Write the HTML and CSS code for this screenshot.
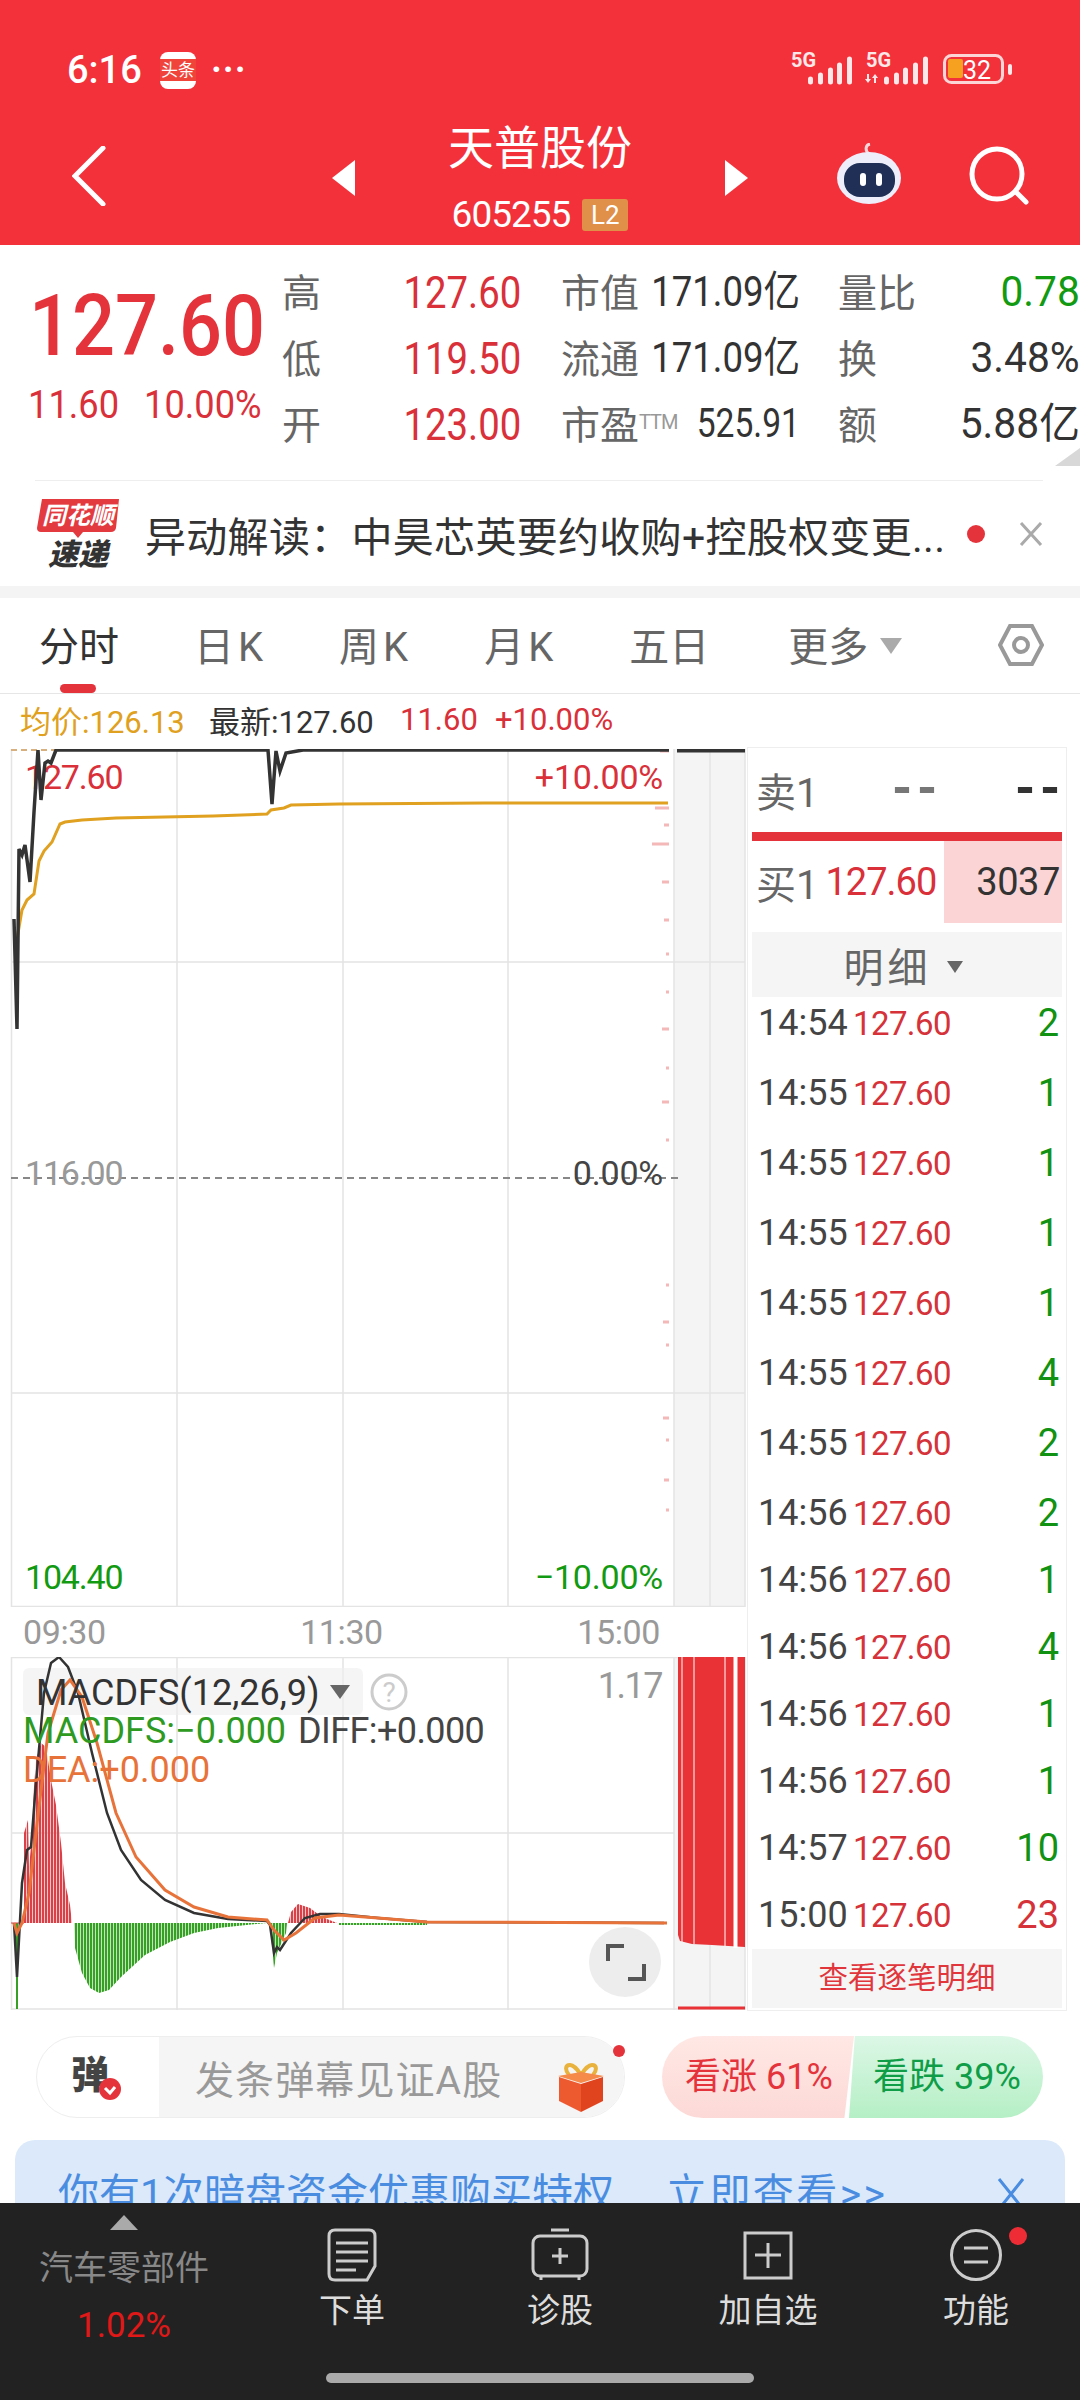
FILE: index.html
```html
<!DOCTYPE html>
<html lang="zh-CN">

<head>
    <meta charset="UTF-8">
    <meta name="viewport" content="width=device-width, initial-scale=1.0">
    <title>天普股份</title>
    <link rel="stylesheet" href="styles.css">
</head>

<body>

    <header class="top">
        <div class="status">
            <div class="status-left">
                <span class="clock">6:16</span>
                <span class="app-icon"><span>头条</span></span>
                <span class="status-dots">···</span>
            </div>
            <svg class="status-right" width="222" height="58" viewBox="790 42 222 58">
                <text class="net-text" x="791" y="67">5G</text>
                <path class="sig" d="M810.5 82v-3M820.5 82v-7M830.5 82v-12M839.5 82v-17M849.5 82v-23" />
                <text class="net-text" x="866" y="67">5G</text>
                <path class="sig-thin" d="M868 74v6M875 83v-6" />
                <path class="sig-arrow" d="M865 79h6l-3 4zM872 78h6l-3-4z" />
                <path class="sig" d="M886.5 82v-3M896.5 82v-7M905.5 82v-12M915.5 82v-17M925.5 82v-23" />
                <rect class="batt" x="944.5" y="55.5" width="58" height="27" rx="7" />
                <rect class="batt-fill" x="948" y="59" width="15" height="19" rx="2" />
                <rect class="batt-nub" x="1008" y="64" width="4" height="11" rx="2" />
                <text class="batt-text" x="963" y="79">32</text>
            </svg>
        </div>
        <div class="nav">
            <svg class="back" width="34" height="60" viewBox="0 0 34 60">
                <path d="M31 2 3 30l28 28" />
            </svg>
            <div class="nav-center">
                <span class="tri-left"></span>
                <div class="stock">
                    <div class="stock-name">天普股份</div>
                    <div class="stock-code">605255<span class="l2">L2</span></div>
                </div>
                <span class="tri-right"></span>
            </div>
            <div class="nav-right">
                <svg class="bot" width="68" height="62" viewBox="0 0 68 62">
                    <path class="antenna" d="M33 11C29 8 29 2 34 1" />
                    <ellipse class="bot-head" cx="33" cy="35" rx="32" ry="26" />
                    <rect class="bot-face" x="8" y="20" width="51" height="34" rx="16" />
                    <rect class="bot-eye" x="24" y="30" width="6" height="13" rx="3" />
                    <rect class="bot-eye" x="40" y="30" width="6" height="13" rx="3" />
                </svg>
                <svg class="search" width="60" height="60" viewBox="0 0 60 60">
                    <circle cx="28" cy="28" r="25" />
                    <path d="M47 46 57 56" />
                </svg>
            </div>
        </div>
    </header>

    <section class="quote">
        <div class="price-box">
            <div class="price">127.60</div>
            <div class="change"><span>11.60</span><span>10.00%</span></div>
        </div>
        <div class="stats">
            <div class="stat"><span class="k">高</span><span class="v up">127.60</span></div>
            <div class="stat"><span class="k">市值</span><span class="n">171.09亿</span></div>
            <div class="stat last"><span class="k">量比</span><span class="n green">0.78</span></div>
            <div class="stat"><span class="k">低</span><span class="v up">119.50</span></div>
            <div class="stat"><span class="k">流通</span><span class="n">171.09亿</span></div>
            <div class="stat last"><span class="k">换</span><span class="n">3.48%</span></div>
            <div class="stat"><span class="k">开</span><span class="v up">123.00</span></div>
            <div class="stat"><span class="k">市盈<sup class="ttm">TTM</sup></span><span class="n pe">525.91</span></div>
            <div class="stat last"><span class="k">额</span><span class="n">5.88亿</span></div>
        </div>
        <span class="corner"></span>
    </section>

    <section class="news">
        <svg class="news-logo" width="82" height="78" viewBox="0 0 82 78">
            <path class="logo-red" d="M5 0h77l-3 29q-1 4-5 4H46l-5 6-5-6H4q-4 0-4-4z" />
            <text class="logo-top" x="41" y="25">同花顺</text>
            <text class="logo-bottom" x="41" y="66">速递</text>
        </svg>
        <div class="news-text">异动解读&#xFF1A;中昊芯英要约收购+控股权变更...</div>
        <span class="news-dot"></span>
        <svg class="news-close" width="24" height="24" viewBox="0 0 24 24">
            <path d="M2 1 22 23M22 1 2 23" />
        </svg>
    </section>

    <div class="band"></div>

    <nav class="tabs">
        <span class="tab on">分时</span>
        <span class="tab k-tab">日K</span>
        <span class="tab k-tab">周K</span>
        <span class="tab k-tab">月K</span>
        <span class="tab">五日</span>
        <span class="tab more">更多<i class="more-arrow"></i></span>
        <svg class="hex" width="46" height="42" viewBox="0 0 46 42">
            <path d="M12 2h22l10 19-10 19H12L2 21z" />
            <circle cx="23" cy="21" r="7" />
        </svg>
    </nav>

    <div class="info">
        <span class="avg">均价:126.13</span>
        <span class="latest">最新:127.60</span>
        <span class="up chg1">11.60</span>
        <span class="up chg2">+10.00%</span>
    </div>

    <section class="board">
        <div class="charts">
            <svg class="chart-price" width="747" height="858" viewBox="0 749 747 858">
                <rect class="strip" x="674" y="749" width="71" height="858" />
                <path class="grid" d="M11.5 749V1607M177 749V1607M343 749V1607M508 749V1607M674 749V1607M710 749V1607M745 749V1607M11 962H745M11 1393H745M11 1606.5H745" />
                <path class="dash-top" d="M11 750H56" />
                <path class="mid" d="M11 1178H680" />
                <text class="t up" x="25" y="789">127.60</text>
                <text class="t up end" x="663" y="789">+10.00%</text>
                <text class="t gray" x="25" y="1185">116.00</text>
                <text class="t dark end" x="663" y="1185">0.00%</text>
                <text class="t green" x="25" y="1589">104.40</text>
                <text class="t green end" x="663" y="1589">−10.00%</text>
                <path class="ticks" d="M660 751h9M655 808h14M664 825h5M652 844h17M662 882h7M664 920h5M666 954h3M666 992h3M662 1029h7M666 1068h3M662 1102h7M666 1140h3M666 1285h3M663 1322h6M666 1345h3M663 1418h6M666 1440h3M664 1480h5M666 1510h3" />
                <path class="avg-line" d="M17 939 22 910 27 900 34 894 39 861 44 851 52 842 60 824 65 822 82 820 116 818 213 816 267 814 271 810 284 808 291 805 339 804 485 803 668 803" />
                <path class="price-line" d="M14 919 17 1029 19 849 22 855 25 845 30 882 34 812 38 750 41 800 45 763 48 761 51 763 56 750H268L272 804 276 751 280 771 286 753 303 750H669" />
                <path class="price-tail" d="M677 750H745" />
            </svg>
            <div class="time-axis"><span>09:30</span><span>11:30</span><span>15:00</span></div>
            <svg class="chart-macd" width="747" height="354" viewBox="0 1657 747 354">
                <defs>
                    <pattern id="redBars" width="3" height="10" patternUnits="userSpaceOnUse">
                        <rect class="bar-red" width="2.3" height="10" />
                    </pattern>
                    <pattern id="greenBars" width="3" height="10" patternUnits="userSpaceOnUse">
                        <rect class="bar-green" width="2.3" height="10" />
                    </pattern>
                </defs>
                <rect class="strip" x="674" y="1657" width="71" height="352" />
                <path class="grid" d="M11.5 1657V2010M177 1657V2010M343 1657V2010M508 1657V2010M674 1657V2010M710 1657V2010M745 1657V2010M11 1657.5H745M11 1833H674M11 2009H745" />
                <path class="vol-red" d="M678 1657H745V1947L712 1945 692 1944 680 1941 678 1935Z" />
                <path class="vol-gap" d="M682 1657V1942M694 1657V1944M725 1657V1946" />
                <path class="vol-gap-wide" d="M735.5 1657V1948" />
                <path class="vol-foot" d="M678 2008H745" />
                <path fill="url(#redBars)" d="M24 1923V1833L28 1820 29 1867 31 1847 34 1787 36 1760 41 1743 46 1747 51 1780 56 1805 61 1843 65 1883 70 1905 72 1923Z" />
                <path fill="url(#redBars)" d="M288 1923 291 1912 298 1904 310 1908 322 1917 337 1923Z" />
                <path fill="url(#greenBars)" d="M74 1923 75 1948 82 1973 90 1988 99 1993 109 1990 121 1977 145 1955 170 1942 194 1933 218 1928 267 1923Z" />
                <path fill="url(#greenBars)" d="M270 1923 274 1968 277 1953 286 1933 287 1923Z" />
                <path fill="url(#greenBars)" d="M339 1923H427V1925H339Z" />
                <path class="spike" d="M17 1923V2009" />
                <path class="zero" d="M11 1923H24" />
                <rect class="picker" x="23" y="1668" width="340" height="47" rx="6" />
                <path class="diff-line" d="M14 1923 17 1977 22 1883 27 1850 31 1847 36 1783 44 1693 51 1663 59 1657 68 1667 78 1693 92 1753 107 1813 121 1850 141 1880 165 1900 194 1913 228 1919 267 1921 270 1925 274 1953 277 1947 280 1950 291 1933 305 1918 320 1914 339 1914 378 1918 427 1922 664 1923" />
                <path class="dea-line" d="M14 1923 17 1933 22 1923 29 1893 39 1807 48 1733 61 1690 70 1680 82 1697 97 1743 116 1813 136 1857 165 1890 194 1907 228 1917 267 1920 274 1930 284 1940 296 1933 315 1918 339 1915 378 1918 427 1922 667 1923" />
                <text class="m picker-text" x="36" y="1705">MACDFS(12,26,9)</text>
                <path class="pick-arrow" d="M330 1685h20l-10 14z" />
                <circle class="help" cx="389" cy="1692" r="17" />
                <text class="help-q" x="389" y="1702">?</text>
                <text class="m gray end scale-max" x="662" y="1698">1.17</text>
                <text class="m macd-green" x="23" y="1743">MACDFS:−0.000</text>
                <text class="m dark" x="298" y="1743">DIFF:+0.000</text>
                <text class="m dea" x="23" y="1782">DEA:+0.000</text>
                <ellipse class="full-btn" cx="625" cy="1962" rx="36" ry="35" />
                <path class="full-icon" d="M608 1961V1946H624M644 1964V1979H628" />
            </svg>
        </div>

        <aside class="side">
            <div class="sell"><span class="lvl">卖1</span><span class="nil gray-nil">--</span><span class="nil">--</span></div>
            <div class="red-bar"></div>
            <div class="buy">
                <span class="lvl">买1</span>
                <span class="buy-price up">127.60</span>
                <span class="buy-qty">3037</span>
            </div>
            <div class="detail-head">明细<i class="detail-arrow"></i></div>
            <ul class="ticks-list">
                <li class="row"><span>14:54</span><b>127.60</b><em>2</em></li>
                <li class="row"><span>14:55</span><b>127.60</b><em>1</em></li>
                <li class="row"><span>14:55</span><b>127.60</b><em>1</em></li>
                <li class="row"><span>14:55</span><b>127.60</b><em>1</em></li>
                <li class="row"><span>14:55</span><b>127.60</b><em>1</em></li>
                <li class="row"><span>14:55</span><b>127.60</b><em>4</em></li>
                <li class="row"><span>14:55</span><b>127.60</b><em>2</em></li>
                <li class="row tight"><span>14:56</span><b>127.60</b><em>2</em></li>
                <li class="row tight"><span>14:56</span><b>127.60</b><em>1</em></li>
                <li class="row tight"><span>14:56</span><b>127.60</b><em>4</em></li>
                <li class="row tight"><span>14:56</span><b>127.60</b><em>1</em></li>
                <li class="row tight"><span>14:56</span><b>127.60</b><em>1</em></li>
                <li class="row tight"><span>14:57</span><b>127.60</b><em>10</em></li>
                <li class="row end-row"><span>15:00</span><b>127.60</b><em class="red">23</em></li>
            </ul>
            <div class="detail-link">查看逐笔明细</div>
        </aside>
    </section>

    <section class="social">
        <div class="barrage">
            <div class="barrage-tag">
                <span>弹</span>
                <svg class="tag-check" width="24" height="24" viewBox="0 0 24 24">
                    <circle cx="12" cy="12" r="11" />
                    <path d="M7 11l5 5 5-6" />
                </svg>
            </div>
            <div class="barrage-input">
                <span>发条弹幕见证A股</span>
                <svg class="gift" width="48" height="50" viewBox="0 0 48 50">
                    <path class="bow" d="M24 13C14 -4 4 4 12 13M24 13C34 -4 44 4 36 13" />
                    <path class="gift-lid" d="M1 14 24 10l23 4-23 7z" />
                    <path class="gift-left" d="M2 15 24 22v28L2 39z" />
                    <path class="gift-right" d="M46 15 24 22v28l22-11z" />
                </svg>
                <span class="barrage-dot"></span>
            </div>
        </div>
        <div class="mood">
            <div class="bull">看涨 61%</div>
            <div class="bear">看跌 39%</div>
        </div>
    </section>

    <div class="promo">
        <span class="promo-text">你有1次暗盘资金优惠购买特权</span>
        <span class="promo-link">立即查看&gt;&gt;</span>
        <svg class="promo-close" width="30" height="32" viewBox="0 0 30 32">
            <path d="M3 1 27 31M27 1 3 31" />
        </svg>
    </div>

    <footer class="bottom">
        <div class="bottom-row">
            <div class="sector">
                <span class="sector-tri"></span>
                <div class="sector-name">汽车零部件</div>
                <div class="sector-pct">1.02%</div>
            </div>
            <div class="action">
                <svg width="50" height="54" viewBox="0 0 50 54">
                    <path d="M8 2h34q6 0 6 6v30l-8 14H8q-6 0-6-6V8q0-6 6-6z" />
                    <path d="M9 15h32M9 24h32M9 33h32M9 42h20" />
                </svg>
                <span>下单</span>
            </div>
            <div class="action">
                <svg width="58" height="54" viewBox="0 0 58 54">
                    <path d="M20 2h18" />
                    <rect x="2" y="8" width="54" height="40" rx="7" />
                    <path d="M29 20v16M21 28h16M10 48v4M48 48v4" />
                </svg>
                <span>诊股</span>
            </div>
            <div class="action">
                <svg width="50" height="54" viewBox="0 0 50 54">
                    <rect x="2" y="5" width="46" height="45" />
                    <path d="M25 15v25M12 27h26" />
                </svg>
                <span>加自选</span>
            </div>
            <div class="action">
                <svg width="54" height="54" viewBox="0 0 54 54">
                    <circle cx="27" cy="27" r="24.5" />
                    <path d="M15 20h24M15 34h24" />
                </svg>
                <span>功能</span>
                <i class="action-dot"></i>
            </div>
        </div>
        <div class="home-bar"></div>
    </footer>

</body>

</html>
```

FILE: styles.css
```css
body {
    margin: 0;
    width: 1080px;
    height: 2400px;
    overflow: hidden;
    display: flex;
    flex-direction: column;
    background-color: #fff;
    color: #333;
    font-family: Roboto, "Noto Sans CJK SC", sans-serif;
}

svg {
    display: block;
}

.up {
    color: #d9303a;
    fill: #d9303a;
}

.green {
    color: #129a12;
    fill: #129a12;
}

/* header */
.top {
    height: 245px;
    background-color: #f3313b;
    color: #fff;
}

.status {
    height: 107px;
    box-sizing: border-box;
    padding: 50px 68px 0 67px;
    display: flex;
    justify-content: space-between;
    align-items: flex-start;
}

.status-left {
    display: flex;
    align-items: center;
    height: 40px;
}

.status-right {
    margin-top: -8px;
}

.clock {
    font-size: 38px;
    font-weight: 500;
    width: 93px;
}

.app-icon {
    width: 36px;
    height: 37px;
    border-radius: 8px;
    background-color: #fff;
    display: flex;
    align-items: center;
}

.app-icon span {
    width: 36px;
    height: 22px;
    line-height: 22px;
    background-color: #f0443a;
    font-size: 17px;
    text-align: center;
    white-space: nowrap;
}

.status-dots {
    margin-left: 15px;
    font-size: 36px;
    font-weight: 700;
    letter-spacing: 1px;
    line-height: 40px;
}

.net-text {
    font-size: 20px;
    font-weight: 700;
    fill: #fde8e9;
}

.sig {
    stroke: #fde8e9;
    stroke-width: 5;
    stroke-linecap: round;
    fill: none;
}

.sig-thin {
    stroke: #fde8e9;
    stroke-width: 2;
    fill: none;
}

.sig-arrow {
    fill: #fde8e9;
}

.batt {
    fill: none;
    stroke: #fde8e9;
    stroke-width: 3;
    opacity: 0.9;
}

.batt-fill {
    fill: #f6a11f;
}

.batt-nub {
    fill: #fde8e9;
}

.batt-text {
    fill: #fff;
    font-size: 25px;
}

.nav {
    height: 138px;
    display: grid;
    grid-template-columns: 1fr auto 1fr;
    align-items: center;
}

.back {
    margin-left: 72px;
}

.back path,
.search circle,
.search path {
    fill: none;
    stroke: #fff;
    stroke-width: 5;
    stroke-linecap: round;
}

.nav-center {
    display: flex;
    align-items: center;
    gap: 93px;
    margin-top: 4px;
}

.tri-left,
.tri-right {
    width: 0;
    height: 0;
    border-top: 18px solid transparent;
    border-bottom: 18px solid transparent;
}

.tri-left {
    border-right: 23px solid #fff;
}

.tri-right {
    border-left: 23px solid #fff;
}

.stock {
    width: 184px;
    margin-top: -4px;
}

.stock-name {
    font-size: 46px;
    line-height: 56px;
    white-space: nowrap;
    text-align: center;
}

.stock-code {
    margin-top: 22px;
    height: 34px;
    font-size: 37px;
    line-height: 34px;
    letter-spacing: -1px;
    display: flex;
    align-items: center;
    justify-content: center;
    white-space: nowrap;
}

.l2 {
    margin-left: 12px;
    width: 46px;
    height: 32px;
    line-height: 32px;
    border-radius: 3px;
    background-color: #e09048;
    font-size: 26px;
    text-align: center;
    letter-spacing: 0;
}

.nav-right {
    justify-self: end;
    display: flex;
    align-items: center;
    gap: 65px;
    padding-right: 51px;
}

.bot {
    margin-top: -4px;
}

.antenna {
    fill: none;
    stroke: #f9d6d9;
    stroke-width: 3;
}

.bot-head {
    fill: #eeeefb;
}

.bot-face {
    fill: #1f2f55;
}

.bot-eye {
    fill: #fff;
}

/* quote */
.quote {
    position: relative;
    height: 235px;
    display: flex;
}

.price-box {
    width: 282px;
    box-sizing: border-box;
    padding: 46px 0 0 28px;
}

/* the digits of the quote are taller and narrower than Roboto */
.price {
    font-size: 86px;
    line-height: 70px;
    font-weight: 500;
    color: #e5333b;
    margin-left: 1px;
    white-space: nowrap;
    transform: scaleX(0.88);
    transform-origin: left center;
}

.change {
    margin-top: 24px;
    display: flex;
    gap: 18px;
    font-size: 39px;
    line-height: 40px;
    color: #d9303a;
}

.change span {
    transform: scaleX(0.93);
    transform-origin: left center;
}

.stats {
    flex: 1;
    padding-top: 15px;
    display: grid;
    grid-template-columns: 279px 277px 242px;
    grid-auto-rows: 66px;
}

.stat {
    display: flex;
    align-items: center;
    justify-content: space-between;
    padding-right: 40px;
    white-space: nowrap;
}

.stat:nth-child(3n+2) {
    padding-right: 38px;
}

.stat.last {
    padding-right: 0;
}

.k {
    font-size: 39px;
    color: #666;
    margin-bottom: 6px;
}

.ttm {
    font-size: 20px;
    color: #999;
    vertical-align: 10px;
    line-height: 0;
    letter-spacing: -1px;
}

.v {
    font-size: 44px;
    margin-left: -30px;
    transform: scaleX(0.87);
    transform-origin: right center;
}

.n {
    font-size: 42px;
    line-height: 40px;
    margin-left: -30px;
    margin-bottom: 3px;
    transform: scaleX(0.87);
    transform-origin: right center;
}

.n.pe {
    font-size: 40px;
    transform: scaleX(0.84);
}

.last .n {
    transform: scaleX(0.97);
}

.corner {
    position: absolute;
    right: 0;
    bottom: 14px;
    border-left: 25px solid transparent;
    border-bottom: 18px solid #d8d8d8;
}

/* news */
.news {
    height: 106px;
    margin: 0 37px 0 35px;
    border-top: 1px solid #eee;
    box-sizing: border-box;
    display: flex;
    align-items: center;
    position: relative;
}

.news-logo {
    margin: 8px 0 0 2px;
}

.logo-red {
    fill: #e33a3f;
}

.logo-top {
    fill: #fff;
    font-size: 24px;
    font-weight: 700;
    font-style: italic;
    text-anchor: middle;
}

.logo-bottom {
    fill: #333;
    font-size: 30px;
    font-weight: 900;
    font-style: italic;
    text-anchor: middle;
}

.news-text {
    margin-left: 26px;
    width: 805px;
    font-size: 41px;
    letter-spacing: 0.3px;
    color: #333;
    white-space: nowrap;
}

.news-dot {
    position: absolute;
    left: 932px;
    top: 44px;
    width: 18px;
    height: 18px;
    border-radius: 50%;
    background-color: #e5333b;
}

.news-close {
    position: absolute;
    right: 0;
    top: 41px;
}

.news-close path {
    fill: none;
    stroke: #aaa;
    stroke-width: 3;
}

.band {
    height: 12px;
    background-color: #f4f4f4;
}

/* tabs */
.tabs {
    height: 96px;
    box-sizing: border-box;
    border-bottom: 1px solid #e6e6e6;
    padding-left: 39px;
    display: flex;
    align-items: center;
    gap: 72px;
    position: relative;
    font-size: 40px;
    color: #666;
}

.tab {
    white-space: nowrap;
    padding-bottom: 3px;
}

.k-tab {
    letter-spacing: 4px;
}

.tab.on {
    color: #333;
    margin-right: 3px;
}

.tab.on::after {
    content: "";
    position: absolute;
    left: 60px;
    top: 86px;
    width: 36px;
    height: 9px;
    border-radius: 5px;
    background-color: #e5333b;
}

.more {
    margin-left: 7px;
    display: flex;
    align-items: center;
}

.more-arrow {
    margin: 4px 0 0 12px;
    border-left: 11px solid transparent;
    border-right: 11px solid transparent;
    border-top: 16px solid #aaa;
}

.hex {
    position: absolute;
    left: 998px;
    top: 26px;
}

.hex path,
.hex circle {
    fill: none;
    stroke: #999;
    stroke-width: 4;
}

/* info line */
.info {
    height: 51px;
    display: flex;
    align-items: center;
    padding-left: 20px;
    font-size: 31px;
    white-space: nowrap;
}

.avg {
    color: #e0a020;
    width: 189px;
}

.latest {
    color: #333;
    width: 191px;
}

.chg1 {
    width: 95px;
}

/* board */
.board {
    height: 1266px;
    display: flex;
    padding-right: 13px;
    box-sizing: border-box;
}

.charts {
    width: 747px;
    padding-top: 4px;
}

.strip {
    fill: #f4f4f4;
}

.grid {
    fill: none;
    stroke: #e4e4e4;
    stroke-width: 1.5;
}

.dash-top {
    fill: none;
    stroke: #d8b080;
    stroke-width: 2;
    stroke-dasharray: 6 4;
}

.mid {
    fill: none;
    stroke: #888;
    stroke-width: 2;
    stroke-dasharray: 7 5;
}

.t {
    font-size: 34px;
    letter-spacing: -1.2px;
}

.t.end {
    letter-spacing: -0.2px;
}

.end {
    text-anchor: end;
}

.gray {
    fill: #999;
}

.dark {
    fill: #444;
}

.ticks {
    fill: none;
    stroke: #f4b8b8;
    stroke-width: 3;
}

.avg-line {
    fill: none;
    stroke: #e0a020;
    stroke-width: 3;
}

.price-line {
    fill: none;
    stroke: #333;
    stroke-width: 3.5;
}

.price-tail {
    fill: none;
    stroke: #333;
    stroke-width: 5;
}

.time-axis {
    height: 50px;
    padding: 0 87px 0 23px;
    display: flex;
    justify-content: space-between;
    align-items: center;
    font-size: 34px;
    color: #999;
    letter-spacing: -0.4px;
}

.bar-red {
    fill: #d94048;
}

.bar-green {
    fill: #36a024;
}

.vol-red {
    fill: #e83236;
}

.vol-foot {
    fill: none;
    stroke: #e83236;
    stroke-width: 3;
}

.vol-gap,
.vol-gap-wide {
    fill: none;
    stroke: #fff;
    stroke-width: 1;
}

.vol-gap-wide {
    stroke-width: 4;
}

.spike {
    fill: none;
    stroke: #36a024;
    stroke-width: 2;
}

.zero {
    fill: none;
    stroke: #d94048;
    stroke-width: 1;
}

.picker {
    fill: #eee;
    opacity: 0.6;
}

.diff-line {
    fill: none;
    stroke: #333;
    stroke-width: 2.5;
}

.dea-line {
    fill: none;
    stroke: #e8733a;
    stroke-width: 3;
}

.m {
    font-size: 36px;
    letter-spacing: -0.6px;
}

.picker-text {
    fill: #333;
    letter-spacing: 0;
}

.scale-max {
    letter-spacing: -1.5px;
}

.macd-green {
    fill: #2e9a1f;
    letter-spacing: 0;
}

.dea {
    fill: #e8733a;
    letter-spacing: 0;
}

.pick-arrow {
    fill: #666;
}

.help {
    fill: none;
    stroke: #ccc;
    stroke-width: 3;
}

.help-q {
    fill: #ccc;
    font-size: 28px;
    text-anchor: middle;
}

.full-btn {
    fill: #ededed;
}

.full-icon {
    fill: none;
    stroke: #555;
    stroke-width: 4;
}

/* side panel */
.side {
    width: 320px;
    height: 1264px;
    margin-top: 2px;
    box-sizing: border-box;
    border: 1px solid #eee;
    padding: 0 4px;
}

.sell {
    height: 84px;
    display: flex;
    align-items: center;
    padding-left: 4px;
}

.lvl {
    font-size: 40px;
    color: #666;
    white-space: nowrap;
}

.sell .lvl {
    width: 131px;
}

.nil {
    font-family: "Liberation Mono", monospace;
    font-size: 50px;
    font-weight: 700;
    line-height: 40px;
    letter-spacing: -5px;
    color: #333;
}

.gray-nil {
    color: #777;
    width: 123px;
}

.red-bar {
    height: 9px;
    background-color: #e5333b;
}

.buy {
    height: 82px;
    display: flex;
    align-items: center;
    padding-left: 4px;
}

.buy-price {
    margin-left: 7px;
    width: 119px;
    font-size: 38px;
    letter-spacing: -1px;
    white-space: nowrap;
}

.buy-qty {
    flex: 1;
    align-self: stretch;
    background-color: #fbd5d5;
    font-size: 38px;
    line-height: 82px;
    text-align: right;
    padding-right: 2px;
    letter-spacing: -0.4px;
}

.detail-head {
    margin-top: 9px;
    height: 65px;
    background-color: #f5f5f5;
    color: #666;
    font-size: 40px;
    letter-spacing: 4px;
    display: flex;
    align-items: center;
    justify-content: center;
    padding-right: 8px;
}

.detail-arrow {
    margin: 4px 0 0 15px;
    border-left: 8px solid transparent;
    border-right: 8px solid transparent;
    border-top: 12px solid #666;
}

.ticks-list {
    list-style: none;
    margin: 0;
    padding: 0;
}

.row {
    height: 70px;
    line-height: 53px;
    display: flex;
    padding: 0 3px 0 6px;
    white-space: nowrap;
}

.row.tight {
    height: 67px;
}

.row.end-row {
    height: 60px;
}

.row span {
    width: 95px;
    font-size: 36px;
    color: #444;
}

.row b {
    font-weight: 400;
    font-size: 33px;
    color: #d5323a;
    letter-spacing: -0.6px;
}

.row em {
    margin-left: auto;
    font-style: normal;
    font-size: 38px;
    color: #129212;
}

.row em.red {
    color: #d5323a;
}

.detail-link {
    height: 59px;
    line-height: 59px;
    background-color: #f5f5f5;
    color: #e0363c;
    font-size: 29.5px;
    text-align: center;
}

/* barrage and mood */
.social {
    height: 82px;
    margin-top: 25px;
    padding-left: 36px;
    display: flex;
    gap: 37px;
}

.barrage {
    width: 589px;
    box-sizing: border-box;
    display: flex;
    border: 1px solid #eee;
    border-radius: 41px;
    position: relative;
}

.barrage-tag {
    width: 122px;
    flex: none;
    position: relative;
    font-size: 38px;
    font-weight: 900;
    color: #444;
    line-height: 76px;
    padding-left: 34px;
    box-sizing: border-box;
}

.tag-check {
    position: absolute;
    left: 61px;
    top: 40px;
}

.tag-check circle {
    fill: #e5333b;
}

.tag-check path {
    fill: none;
    stroke: #fff;
    stroke-width: 3;
}

.barrage-input {
    flex: 1;
    background-color: #f5f5f5;
    border-radius: 0 41px 41px 0;
    position: relative;
    display: flex;
    align-items: center;
    padding-left: 36px;
    font-size: 39px;
    letter-spacing: 1.1px;
    color: #999;
    white-space: nowrap;
}

.gift {
    position: absolute;
    left: 398px;
    top: 25px;
}

.bow {
    fill: none;
    stroke: #e8b23c;
    stroke-width: 4;
}

.gift-lid {
    fill: #f58a4a;
}

.gift-left {
    fill: #ee5a30;
}

.gift-right {
    fill: #e0441f;
}

.barrage-dot {
    position: absolute;
    left: 454px;
    top: 8px;
    width: 12px;
    height: 12px;
    border-radius: 50%;
    background-color: #e5333b;
}

.mood {
    width: 381px;
    display: flex;
    font-size: 36px;
    line-height: 82px;
    white-space: nowrap;
}

.bull {
    width: 192px;
    box-sizing: border-box;
    padding-left: 23px;
    border-radius: 41px 0 0 41px;
    background: linear-gradient(#ffe8e5, #fcd9d6);
    color: #e5333b;
    clip-path: polygon(0 0, 100% 0, 95% 100%, 0 100%);
}

.bear {
    flex: 1;
    box-sizing: border-box;
    margin-left: -5px;
    padding-left: 24px;
    border-radius: 0 41px 41px 0;
    background: linear-gradient(#dcf7e6, #b5efc5);
    color: #0f9d48;
    clip-path: polygon(3% 0, 100% 0, 100% 100%, 0 100%);
}

/* promo strip, cut off by the bottom bar */
.promo {
    position: relative;
    height: 63px;
    margin: 22px 15px 0;
    box-sizing: border-box;
    padding: 30px 0 0 43px;
    background-color: #dbe9fb;
    border-radius: 20px 20px 0 0;
    overflow: hidden;
    display: flex;
    gap: 52px;
    font-size: 41px;
    line-height: 48px;
    color: #4a8de0;
    white-space: nowrap;
}

.promo-link {
    letter-spacing: 2.4px;
}

.promo-close {
    position: absolute;
    right: 39px;
    top: 38px;
}

.promo-close path {
    fill: none;
    stroke: #4a8de0;
    stroke-width: 3;
}

/* bottom bar */
.bottom {
    height: 197px;
    background-color: #222;
    display: flex;
    flex-direction: column;
    align-items: center;
}

.bottom-row {
    width: 100%;
    height: 170px;
    display: flex;
}

.sector {
    width: 248px;
    display: flex;
    flex-direction: column;
    align-items: center;
    padding-top: 12px;
    font-size: 34px;
    line-height: 46px;
    white-space: nowrap;
}

.sector-tri {
    border-left: 14px solid transparent;
    border-right: 14px solid transparent;
    border-bottom: 15px solid #aaa;
}

.sector-name {
    margin-top: 15px;
    color: #888;
}

.sector-pct {
    margin-top: 12px;
    font-size: 35px;
    color: #e01818;
}

.action {
    width: 208px;
    position: relative;
    padding-top: 25px;
    box-sizing: border-box;
    display: flex;
    flex-direction: column;
    align-items: center;
    font-size: 33px;
    line-height: 44px;
    color: #ddd;
}

.action span {
    margin-top: 7px;
}

.action svg * {
    fill: none;
    stroke: #ccc;
    stroke-width: 3;
}

.action-dot {
    position: absolute;
    left: 137px;
    top: 24px;
    width: 18px;
    height: 18px;
    border-radius: 50%;
    background-color: #ee2c35;
}

.home-bar {
    width: 428px;
    height: 10px;
    border-radius: 5px;
    background-color: #aaa;
}
```
